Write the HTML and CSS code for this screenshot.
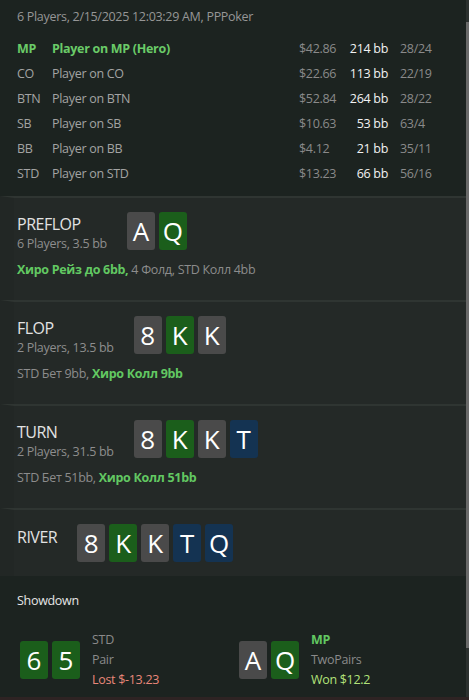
FILE: index.html
```html
<!DOCTYPE html>
<html lang="ru">
<head>
<meta charset="utf-8">
<title>Hand history</title>
<link rel="stylesheet" href="styles.css">
</head>
<body>
<div class="window">
  <div class="app">
    <main class="content">
      <section class="summary">
        <div class="summary-title">6 Players, 2/15/2025 12:03:29 AM, PPPoker</div>
        <div class="players">
          <div class="prow hero"><span class="pos">MP</span><span class="name">Player on MP (Hero)</span><span class="money">$42.86</span><span class="bb">214 bb</span><span class="stats">28/24</span></div>
          <div class="prow"><span class="pos">CO</span><span class="name">Player on CO</span><span class="money">$22.66</span><span class="bb">113 bb</span><span class="stats">22/19</span></div>
          <div class="prow"><span class="pos">BTN</span><span class="name">Player on BTN</span><span class="money">$52.84</span><span class="bb">264 bb</span><span class="stats">28/22</span></div>
          <div class="prow"><span class="pos">SB</span><span class="name">Player on SB</span><span class="money">$10.63</span><span class="bb">53 bb</span><span class="stats">63/4</span></div>
          <div class="prow"><span class="pos">BB</span><span class="name">Player on BB</span><span class="money">$4.12</span><span class="bb">21 bb</span><span class="stats">35/11</span></div>
          <div class="prow"><span class="pos">STD</span><span class="name">Player on STD</span><span class="money">$13.23</span><span class="bb">66 bb</span><span class="stats">56/16</span></div>
        </div>
      </section>

      <section class="street">
        <div class="street-head">
          <div class="street-info">
            <div class="street-name">PREFLOP</div>
            <div class="street-sub">6 Players, 3.5 bb</div>
          </div>
          <div class="cards"><span class="card grey">A</span><span class="card green">Q</span></div>
        </div>
        <div class="actions"><span class="act-hero">Хиро Рейз до 6bb,</span> 4 Фолд, STD Колл 4bb</div>
      </section>

      <section class="street">
        <div class="street-head">
          <div class="street-info">
            <div class="street-name">FLOP</div>
            <div class="street-sub">2 Players, 13.5 bb</div>
          </div>
          <div class="cards"><span class="card grey">8</span><span class="card green">K</span><span class="card grey">K</span></div>
        </div>
        <div class="actions">STD Бет 9bb, <span class="act-hero">Хиро Колл 9bb</span></div>
      </section>

      <section class="street">
        <div class="street-head">
          <div class="street-info">
            <div class="street-name">TURN</div>
            <div class="street-sub">2 Players, 31.5 bb</div>
          </div>
          <div class="cards"><span class="card grey">8</span><span class="card green">K</span><span class="card grey">K</span><span class="card blue">T</span></div>
        </div>
        <div class="actions">STD Бет 51bb, <span class="act-hero">Хиро Колл 51bb</span></div>
      </section>

      <section class="street river">
        <div class="street-head">
          <div class="street-info">
            <div class="street-name">RIVER</div>
          </div>
          <div class="cards"><span class="card grey">8</span><span class="card green">K</span><span class="card grey">K</span><span class="card blue">T</span><span class="card blue">Q</span></div>
        </div>
      </section>

      <section class="showdown">
        <div class="showdown-title">Showdown</div>
        <div class="sd-grid">
          <div class="sd-player">
            <div class="cards"><span class="card green">6</span><span class="card green">5</span></div>
            <div class="sd-info">
              <div class="sd-name">STD</div>
              <div class="sd-hand">Pair</div>
              <div class="sd-lost">Lost $-13.23</div>
            </div>
          </div>
          <div class="sd-player">
            <div class="cards"><span class="card grey">A</span><span class="card green">Q</span></div>
            <div class="sd-info">
              <div class="sd-name hero-name">MP</div>
              <div class="sd-hand">TwoPairs</div>
              <div class="sd-won">Won $12.2</div>
            </div>
          </div>
        </div>
      </section>
    </main>
    <div class="scrollbar"><div class="thumb"></div></div>
  </div>
  <div class="bottom-strip"></div>
</div>
</body>
</html>
```

FILE: styles.css
```css
* { box-sizing: border-box; }
html, body { margin: 0; padding: 0; }
body {
  background: #1c2320;
  font-family: "Open Sans", "Noto Sans", sans-serif;
  font-size: 12.5px;
  letter-spacing: -0.3px;
  color: #9a9a9a;
}
.window {
  display: flex;
  flex-direction: column;
  height: 700px;
  width: 469px;
}
.app {
  display: flex;
  flex: 1;
  min-height: 0;
}
.content {
  flex: 1;
  display: flex;
  flex-direction: column;
  background: #1c2320;
  overflow: hidden;
}
.scrollbar {
  width: 3px;
  background: #2c312f;
  padding-top: 22px;
}
.thumb {
  height: 626px;
  background: #6a6a6a;
}
.bottom-strip {
  height: 3px;
  background: #2e2323;
}

/* summary */
.summary {
  padding: 7px 17px 10px 17px;
}
.summary-title {
  line-height: 20px;
  color: #969696;
  margin-bottom: 9px;
}
.prow {
  display: grid;
  grid-template-columns: 35px 1fr 48px 41px 61px;
  height: 25px;
  align-items: center;
  color: #a3a3a3;
}
.prow .money { color: #8a8a8a; }
.prow .bb { color: #f2f2f2; text-align: right; white-space: nowrap; }
.prow .stats { color: #8a8a8a; padding-left: 12px; }
.prow.hero .pos, .prow.hero .name { color: #6acb68; font-weight: 700; }

/* streets */
.street {
  background: #242927;
  border-top: 2px solid #2f3532;
  border-left: 14px solid #222725;
  padding: 14px 17px 21px 3px;
}
.street.river { padding-bottom: 14px; }
.street-head {
  display: flex;
  align-items: flex-start;
  gap: 20px;
}
.street-info { padding-top: 2px; }
.street-name {
  font-size: 16px;
  letter-spacing: -0.5px;
  line-height: 20px;
  color: #e2e2e2;
}
.river .street-info { padding-top: 3px; }
.street-sub {
  line-height: 20px;
  color: #8e8e8e;
}
.actions {
  margin-top: 7px;
  line-height: 18px;
  color: #8c8c8c;
}
.act-hero { color: #62c862; font-weight: 700; }

.cards { display: flex; gap: 4px; }
.card {
  width: 28px;
  height: 38px;
  border-radius: 3px;
  display: flex;
  align-items: center;
  justify-content: center;
  font-size: 26px;
  letter-spacing: 0;
  color: #ffffff;
  line-height: 1;
}
.card.grey { background: #4a4a4a; }
.card.green { background: #1b5e1b; }
.card.blue { background: #143352; }

/* showdown */
.showdown {
  flex: 1;
  background: #1c2320;
  padding: 16px 17px 0 17px;
}
.showdown-title {
  line-height: 18px;
  color: #e6e6e6;
}
.sd-grid {
  display: grid;
  grid-template-columns: 219px 1fr;
  margin-top: 20px;
  padding-left: 3px;
}
.sd-player {
  display: flex;
  align-items: center;
  gap: 12px;
}
.sd-info div { line-height: 20px; }
.sd-name { color: #8a8a8a; }
.sd-name.hero-name { color: #62c862; font-weight: 700; }
.sd-hand { color: #8a8a8a; }
.sd-lost { color: #e8877a; }
.sd-won { color: #b3e27a; }
```
